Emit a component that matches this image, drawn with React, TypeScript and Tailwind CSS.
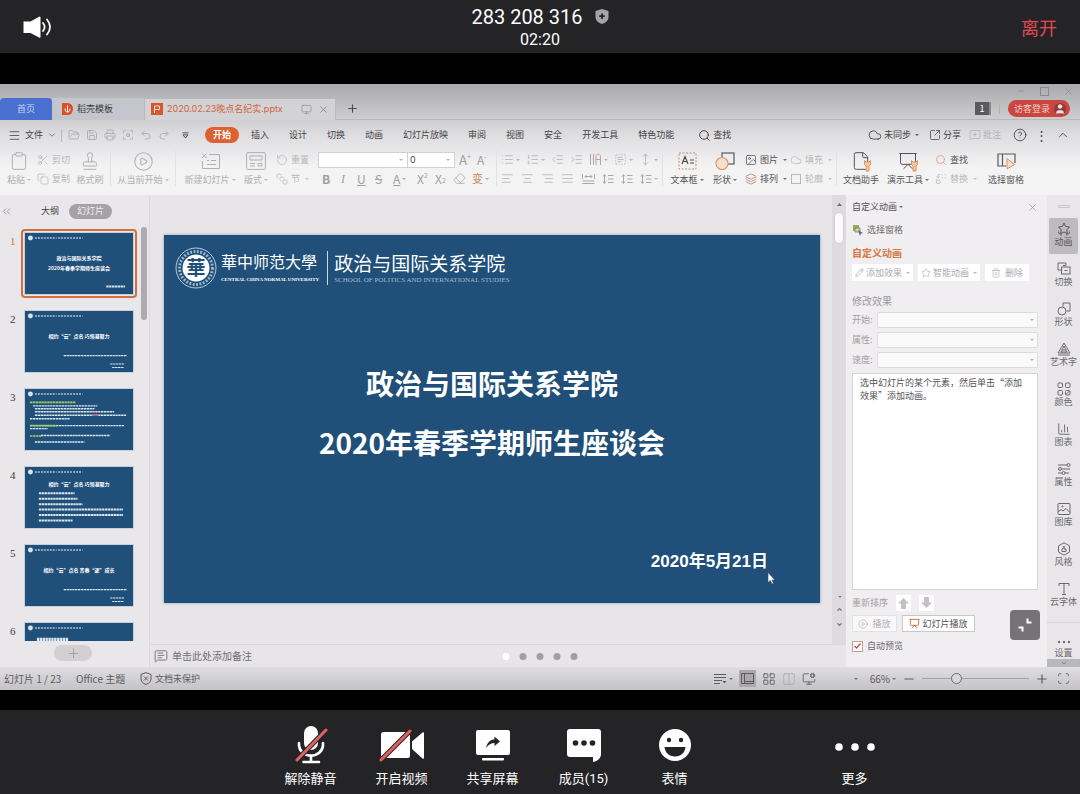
import { useState } from "react"
import type { ReactNode } from "react"
import {
  AlignCenter,
  AlignJustify,
  AlignLeft,
  AlignRight,
  ChartColumn,
  ChevronDown,
  ChevronUp,
  ChevronsLeft,
  CircleHelp,
  CirclePlay,
  Clipboard,
  Cloud,
  Columns2,
  Copy,
  Eraser,
  File,
  FolderOpen,
  Image,
  IndentDecrease,
  IndentIncrease,
  Layers,
  LayoutGrid,
  List,
  ListOrdered,
  Menu,
  MessageSquarePlus,
  MessageSquareText,
  Minus,
  Monitor,
  MonitorCog,
  MoveVertical,
  Pencil,
  Plus,
  Presentation,
  Printer,
  Redo2,
  Replace,
  RotateCcw,
  Save,
  Scan,
  ScanSearch,
  Scissors,
  Search,
  SquareArrowOutUpRight,
  SquareStack,
  Stamp,
  Star,
  TextSelect,
  Trash2,
  Undo2,
  User,
  X,
} from "lucide-react"

const thin = { size: 12, strokeWidth: 1.5 }

function Caret() {
  return (
    <svg width="4" height="2" viewBox="0 0 4 2" className="ml-0.5 shrink-0 opacity-80" aria-hidden="true">
      <path d="M0 0h4L2 2z" fill="currentColor" />
    </svg>
  )
}

function Divider() {
  return <div className="mx-1 h-9 w-px shrink-0 bg-[#e3e2e4]" />
}

function Big({ icon, label, width, off, caret }: { icon: ReactNode; label: string; width: string; off?: boolean; caret?: boolean }) {
  return (
    <button className={`flex shrink-0 flex-col items-center whitespace-nowrap ${width} ${off ? "text-[#b1afb2]" : "text-[#555357]"}`}>
      <span className="flex h-[22px] items-center">{icon}</span>
      <span className="flex h-4 items-center">
        {label}
        {caret && <Caret />}
      </span>
    </button>
  )
}

function Small({ icon, label, off, caret }: { icon: ReactNode; label: string; off?: boolean; caret?: boolean }) {
  return (
    <button className={`flex h-[19px] items-center gap-[3px] whitespace-nowrap ${off ? "text-[#b9b7ba]" : "text-[#555357]"}`}>
      {icon}
      {label}
      {caret && <Caret />}
    </button>
  )
}

function Tool({ label, width, children }: { label: string; width: string; children: ReactNode }) {
  return (
    <button aria-label={label} className={`flex h-[19px] shrink-0 items-center ${width}`}>
      {children}
    </button>
  )
}

/* ---------- meeting bars ---------- */

function MeetingHeader() {
  return (
    <header className="flex h-[53px] shrink-0 items-center justify-between bg-[#242427] px-[23px] font-[Roboto,'Noto_Sans_CJK_SC',sans-serif]">
      <button aria-label="扬声器" className="w-[60px]">
        <svg width="29" height="24" viewBox="0 0 29 24" fill="none">
          <path d="M0.5 6.5h7L16.500 1.500a1 1 0 0 1 1 .8v19.400a1 1 0 0 1-1.500.8L7.500 18h-7z" fill="#fff" />
          <path d="M20 8c2 2.500 2 5.500 0 8M24 4.500c4 4.500 4 10.500 0 15" stroke="#fff" strokeWidth="1.800" strokeLinecap="round" />
        </svg>
      </button>
      <div className="flex flex-col items-center text-white">
        <div className="flex items-center gap-3 text-xl leading-[26px]">
          <h1>283 208 316</h1>
          <svg width="14" height="15" viewBox="0 0 14 15" aria-hidden="true">
            <path d="M7 0 13.500 2v6c0 3.500-3 6-6.500 7C3.500 14 .5 11.500.5 8V2z" fill="#a5a5a8" />
            <path d="M7 4.500v5.500M4.200 7.200h5.600" stroke="#242427" strokeWidth="1.800" />
          </svg>
        </div>
        <time className="text-base leading-5">02:20</time>
      </div>
      <button className="w-[60px] pt-1 text-right text-[18px] text-[#e5484f]">离开</button>
    </header>
  )
}

function MicOff() {
  return (
    <svg width="34" height="38" viewBox="0 0 34 38" fill="none">
      <rect x="10" y="0" width="14" height="24" rx="7" fill="#fff" />
      <path d="M5 17v2a12 10.500 0 0 0 24 0v-2M17 30v5M9.500 36h15.500" stroke="#fff" strokeWidth="2.600" strokeLinecap="round" />
      <path d="M3 34 32 4" stroke="#242427" strokeWidth="5" />
      <path d="M3 34 32 4" stroke="#e0625f" strokeWidth="3" strokeLinecap="round" />
    </svg>
  )
}

function CameraOff() {
  return (
    <svg width="46" height="34" viewBox="0 0 46 34" fill="none">
      <rect x="2" y="4" width="29" height="26" rx="2.500" fill="#fff" />
      <path d="M33 13.500 43.500 4.500q1.500-1 1.500 1v24q0 2-1.500 1L33 21z" fill="#fff" />
      <path d="M2 32 31 3" stroke="#242427" strokeWidth="5" />
      <path d="M2 32 31 3" stroke="#e0625f" strokeWidth="3" strokeLinecap="round" />
    </svg>
  )
}

function ShareScreen() {
  return (
    <svg width="36" height="32" viewBox="0 0 36 32">
      <rect x="1" y="1" width="34" height="25" rx="2" fill="#fff" />
      <rect x="7" y="29" width="22" height="2.500" rx="1" fill="#fff" />
      <path d="M11 19c1-6 5-8.500 8.500-8.500V7.500l5.500 5-5.500 4.500v-3C16 14 13.500 15.500 11 19z" fill="#242427" />
    </svg>
  )
}

function Members() {
  return (
    <svg width="36" height="34" viewBox="0 0 36 34">
      <path d="M4 1h28a3 3 0 0 1 3 3v22c0 4-3 7-8 8v-5H4a3 3 0 0 1-3-3V4a3 3 0 0 1 3-3z" fill="#fff" />
      <circle cx="9.500" cy="15" r="2.800" fill="#242427" />
      <circle cx="18" cy="15" r="2.800" fill="#242427" />
      <circle cx="26.500" cy="15" r="2.800" fill="#242427" />
    </svg>
  )
}

function Smile() {
  return (
    <svg width="34" height="34" viewBox="0 0 34 34">
      <circle cx="17" cy="17" r="16" fill="#fff" />
      <circle cx="11" cy="12" r="2.200" fill="#242427" />
      <circle cx="23" cy="12" r="2.200" fill="#242427" />
      <path d="M6.500 19h21c-.5 5.500-4.500 9.500-10.500 9.500S7 24.500 6.500 19z" fill="#242427" />
    </svg>
  )
}

function More() {
  return (
    <svg width="42" height="34" viewBox="0 0 42 34" fill="#fff">
      <circle cx="5" cy="19" r="3.800" />
      <circle cx="21" cy="19" r="3.800" />
      <circle cx="37" cy="19" r="3.800" />
    </svg>
  )
}

const meetingActions = [
  { label: "解除静音", icon: MicOff },
  { label: "开启视频", icon: CameraOff },
  { label: "共享屏幕", icon: ShareScreen },
  { label: "成员(15)", icon: Members },
  { label: "表情", icon: Smile },
]

function MeetingFooter() {
  return (
    <footer className="flex h-[84px] shrink-0 items-start bg-[#242427] pl-[265px] pt-4 text-[13px] text-white font-[Roboto,'Noto_Sans_CJK_SC',sans-serif]">
      {meetingActions.map((action) => (
        <button key={action.label} className="flex w-[91px] flex-col items-center">
          <span className="flex h-[38px] items-center">
            <action.icon />
          </span>
          <span className="mt-[5px] leading-5">{action.label}</span>
        </button>
      ))}
      <button className="ml-[89px] flex w-[91px] flex-col items-center">
        <span className="flex h-[38px] items-center">
          <More />
        </span>
        <span className="mt-[5px] leading-5">更多</span>
      </button>
    </footer>
  )
}

/* ---------- office window ---------- */

function TitleBar() {
  return (
    <div>
      <div className="flex h-[14px] items-center justify-end gap-3.5 pr-1.5 text-[#8a888b]">
        <button aria-label="最小化"><Minus size={10} strokeWidth={1.5} /></button>
        <button aria-label="最大化">
          <svg width="9" height="9" viewBox="0 0 9 9"><rect x="0.5" y="0.5" width="8" height="8" fill="none" stroke="currentColor" /></svg>
        </button>
        <button aria-label="关闭"><X size={11} strokeWidth={1.5} /></button>
      </div>
      <div className="flex h-[22px] items-center border-b border-[#b9b8bc]">
        <button className="h-[22px] w-[52px] rounded-t-sm bg-[#4a70cf] text-[#c6d5fa]">首页</button>
        <button className="flex h-[22px] w-[92px] items-center gap-1 bg-[#c5c6cc] pl-2.5 text-[#3b393c]">
          <svg width="11" height="12" viewBox="0 0 11 12">
            <path d="M0 0h6a5 6 0 0 1 0 12H0z" fill="#d84f2d" />
            <path d="M5.500 2.500v6.500M3 5.500c0 2.500 1 3.500 2.500 3.500S8 8 8 5.500" fill="none" stroke="#fff" />
          </svg>
          稻壳模板
        </button>
        <div className="flex h-[22px] w-48 items-center gap-1 border-x border-t border-[#b9b8bc] bg-[#d3d3d6] px-1.5">
          <svg width="12" height="12" viewBox="0 0 12 12" className="shrink-0">
            <rect width="12" height="12" fill="#d7572f" />
            <path d="M3.500 10V3h5v3.500h-5" fill="none" stroke="#f6d9cf" />
          </svg>
          <a href="#doc" className="font-[Inter,'Noto_Sans_CJK_SC',sans-serif] whitespace-nowrap text-[#cf6440]">2020.02.23晚点名纪实.pptx</a>
          <span className="ml-auto flex items-center gap-1.5 text-[#807e81]">
            <Monitor size={11} strokeWidth={1.2} />
            <button aria-label="关闭标签"><X size={11} strokeWidth={1.8} /></button>
          </span>
        </div>
        <button aria-label="新建标签" className="ml-2.5 text-[#4c4a4d]"><Plus size={13} /></button>
        <span className="ml-auto flex h-[13px] w-4 items-center justify-center border-r-2 border-[#8b898c] bg-[#5b595c] text-white">1</span>
        <span className="mx-2 h-2.5 w-px bg-[#b2b1b4]" />
        <button className="mr-2.5 flex h-[17px] items-center gap-1 rounded-full bg-[#c9473f] pl-1.5 pr-1 text-[#f7cdc8]">
          访客登录
          <User size={12} className="rounded-full bg-[#8d3a39] text-[#f0dedc]" fill="currentColor" strokeWidth={1} />
        </button>
      </div>
    </div>
  )
}

const menus = ["插入", "设计", "切换", "动画", "幻灯片放映", "审阅", "视图", "安全", "开发工具", "特色功能"]

function MenuBar() {
  return (
    <nav className="flex h-[30px] items-center whitespace-nowrap text-[#464447]">
      <button className="flex w-[62px] items-center gap-1 border-r border-[#bbb9bc] pl-2">
        <Menu size={13} strokeWidth={1.5} />
        文件
        <ChevronDown size={10} strokeWidth={1.5} />
      </button>
      <div className="flex w-[143px] items-center gap-1.5 pl-1.5 text-[#a3a1a4]">
        <FolderOpen {...thin} />
        <Save {...thin} />
        <Printer {...thin} />
        <ScanSearch {...thin} />
        <Undo2 {...thin} />
        <Redo2 {...thin} />
        <svg width="7" height="7" viewBox="0 0 7 7" fill="none" stroke="#59575a" className="ml-1.5">
          <path d="M.5.8h6M1 2.800h5L3.500 6z" />
        </svg>
      </div>
      <button className="mr-3 h-4 w-[34px] rounded-full bg-[#dc6234] font-bold text-white">开始</button>
      <div className="flex gap-5">
        {menus.map((menu) => (
          <button key={menu}>{menu}</button>
        ))}
      </div>
      <button className="ml-6 flex items-center gap-0.5">
        <Search size={13} strokeWidth={1.8} />
        查找
      </button>
      <div className="ml-auto flex items-center pr-2.5">
        <button className="mr-2.5 flex items-center gap-0.5">
          <Cloud size={14} strokeWidth={1.5} />
          未同步
          <Caret />
        </button>
        <button className="mr-2 flex items-center gap-0.5">
          <SquareArrowOutUpRight {...thin} />
          分享
        </button>
        <button className="mr-3 flex items-center gap-0.5 text-[#b1afb2]">
          <MessageSquarePlus {...thin} />
          批注
        </button>
        <button aria-label="帮助" className="mr-2"><CircleHelp size={14} strokeWidth={1.5} /></button>
        <button aria-label="更多选项" className="mr-2 text-[13px]">⋮</button>
        <button aria-label="收起功能区"><ChevronUp size={14} strokeWidth={1.5} /></button>
      </div>
    </nav>
  )
}

function FontGroup() {
  return (
    <div className="w-[174px] shrink-0 text-[#a19fa2]">
      <div className="flex h-[19px] items-center">
        <div className="relative flex h-4 w-[90px] items-center border border-[#d2d0d3] bg-white">
          <select aria-label="字体" className="w-full appearance-none"><option></option></select>
          <span className="pointer-events-none absolute right-1"><Caret /></span>
        </div>
        <div className="relative mr-1 flex h-4 w-[47px] items-center border border-l-0 border-[#d2d0d3] bg-white">
          <select aria-label="字号" className="w-full appearance-none pl-0.5 font-[Inter,sans-serif] text-[#4c4a4d]"><option>0</option></select>
          <span className="pointer-events-none absolute right-1"><Caret /></span>
        </div>
        <Tool label="增大字号" width="w-[18px]"><span className="text-[13px]">A</span><sup className="text-[7px]">+</sup></Tool>
        <Tool label="减小字号" width="w-3"><span className="text-xs">A</span><sup className="text-[7px]">-</sup></Tool>
      </div>
      <div className="flex h-[19px] items-center pl-1 text-xs">
        <Tool label="加粗" width="w-[19px]"><b>B</b></Tool>
        <Tool label="倾斜" width="w-4"><i className="font-[Liberation_Serif,serif]">I</i></Tool>
        <Tool label="下划线" width="w-[18px]"><u>U</u></Tool>
        <Tool label="删除线" width="w-[18px]"><s>S</s></Tool>
        <Tool label="字体颜色" width="w-6"><u>A</u><Caret /></Tool>
        <Tool label="上标" width="w-[18px]">X<sup className="text-[7px]">2</sup></Tool>
        <Tool label="下标" width="w-[18px]">X<sub className="text-[7px]">2</sub></Tool>
        <Tool label="清除格式" width="w-[19px]"><Eraser size={13} strokeWidth={1.3} /></Tool>
        <Tool label="拼音指南" width="w-[18px]"><span className="text-[11px] text-[#c9875f]">变</span><Caret /></Tool>
      </div>
    </div>
  )
}

function SpacingIcon() {
  return (
    <svg width="12" height="12" viewBox="0 0 12 12" fill="none" stroke="currentColor">
      <path d="M2.500 2v8M1 3.500 2.500 1.500 4 3.500M1 8.500l1.500 2L4 8.500M6 2.500h5.500M6 6h5.500M6 9.500h5.500" />
    </svg>
  )
}

function SpreadIcon() {
  return (
    <svg width="13" height="12" viewBox="0 0 13 12" fill="none" stroke="currentColor">
      <path d="M.5 1v5M12.500 1v5M3 3.500h7M4.500 2 3 3.500 4.500 5M8.500 2 10 3.500 8.500 5M.5 8h12M.5 10.500h12" />
    </svg>
  )
}

function VerticalTextIcon() {
  return (
    <svg width="13" height="13" viewBox="0 0 13 13" fill="none" stroke="currentColor">
      <path d="M1.500 1v11M4.500 1v11M7 12V3.500c0-3 4.500-3 4.500 0V12M7 6.500h4.500" />
      <path d="M4.500 1v11" stroke="#cf9d86" />
    </svg>
  )
}

const paraTop = [
  { label: "项目符号", icon: List, caret: true },
  { label: "编号", icon: ListOrdered, caret: true },
  { label: "减少缩进", icon: IndentDecrease },
  { label: "增加缩进", icon: IndentIncrease },
  { label: "文字方向", icon: VerticalTextIcon, caret: true },
  { label: "对齐文本", icon: TextSelect, caret: true },
  { label: "智能图形", icon: MoveVertical, caret: true },
]

const paraBottom = [
  { label: "左对齐", icon: AlignLeft },
  { label: "居中", icon: AlignCenter },
  { label: "右对齐", icon: AlignRight },
  { label: "两端对齐", icon: AlignJustify },
  { label: "分散对齐", icon: SpreadIcon },
  { label: "段前间距", icon: SpacingIcon },
  { label: "段后间距", icon: SpacingIcon },
  { label: "行距", icon: SpacingIcon, caret: true },
]

function ParagraphGroup() {
  return (
    <div className="w-[157px] shrink-0 text-[#aaa8ab]">
      <div className="flex h-[19px] justify-between">
        {paraTop.map((p) => (
          <Tool key={p.label} label={p.label} width="w-auto">
            <p.icon size={13} strokeWidth={1.3} />
            {p.caret && <Caret />}
          </Tool>
        ))}
      </div>
      <div className="flex h-[19px] justify-between">
        {paraBottom.map((p) => (
          <Tool key={p.label} label={p.label} width="w-auto">
            <p.icon size={13} strokeWidth={1.3} />
            {p.caret && <Caret />}
          </Tool>
        ))}
      </div>
    </div>
  )
}

function ShapesIcon() {
  return (
    <svg width="20" height="20" viewBox="0 0 20 20" fill="none">
      <rect x="7" y="2" width="12" height="11" stroke="#5b595c" strokeWidth="1.200" />
      <circle cx="7" cy="12.500" r="6" fill="#f5dfcc" stroke="#d99a72" strokeWidth="1.200" />
    </svg>
  )
}

function NewSlideIcon() {
  return (
    <svg width="19" height="18" viewBox="0 0 19 18" fill="none" stroke="currentColor">
      <path d="M8 2.500h10.500v14H1.500V9M1 1.500l4.500 4.500M5.500 1.500 1 6M6 8.500h2M10 8.500h5M6 12.500h9" />
    </svg>
  )
}

function SlideLayout() {
  return (
    <svg width="20" height="18" viewBox="0 0 20 18" fill="none" stroke="currentColor">
      <rect x="0.600" y="0.600" width="18.800" height="16.800" rx="1" />
      <path d="M4 4h12v4H4zM4 11.500h5M4 14h5M12 11.500h4v2.500h-4z" />
    </svg>
  )
}

function TextBoxIcon() {
  return (
    <svg width="19" height="18" viewBox="0 0 19 18" fill="none">
      <rect x="1" y="1" width="17" height="16" stroke="#c98b6c" strokeDasharray="2 1.500" />
      <path d="m4 12 3-7.500L10 12M5 9.500h4M12 8h4M12 11h4" stroke="#4b494c" strokeWidth="1.200" />
    </svg>
  )
}

function PaneIcon() {
  return (
    <svg width="19" height="18" viewBox="0 0 19 18" fill="none">
      <path d="M9 14H1V2h17v9M5.500 2v12" stroke="#5b595c" strokeWidth="1.200" />
      <path d="m10 6.500 7.500 6-7.500 4.500z" fill="#f5dfcc" stroke="#d98e65" />
    </svg>
  )
}

function OrangeTag({ icon }: { icon: ReactNode }) {
  return (
    <span className="relative">
      {icon}
      <svg width="7" height="12" viewBox="0 0 7 12" className="absolute -bottom-px right-0">
        <path d="M0.500 0.500v4l1.500 1.500v5h3V6l1.500-1.500v-4L5 2H2z" fill="#f3c7a4" stroke="#dc945f" />
      </svg>
    </span>
  )
}

function Ribbon() {
  return (
    <div className="flex h-[45px] items-start whitespace-nowrap pl-1">
      <Big off caret width="w-[30px]" label="粘贴" icon={<Clipboard size={20} strokeWidth={1.2} />} />
      <div className="ml-[3px] w-[37px] shrink-0">
        <Small off label="剪切" icon={<Scissors {...thin} />} />
        <Small off label="复制" icon={<Copy {...thin} />} />
      </div>
      <Big off width="w-8" label="格式刷" icon={<Stamp size={20} strokeWidth={1.2} />} />
      <Divider />
      <Big off caret width="w-14" label="从当前开始" icon={<CirclePlay size={21} strokeWidth={1.2} />} />
      <Divider />
      <Big off caret width="w-[60px]" label="新建幻灯片" icon={<NewSlideIcon />} />
      <Big off caret width="w-8" label="版式" icon={<SlideLayout />} />
      <div className="ml-1 w-[42px] shrink-0">
        <Small off label="重置" icon={<RotateCcw {...thin} />} />
        <Small off caret label="节" icon={<SquareStack {...thin} />} />
      </div>
      <FontGroup />
      <Divider />
      <ParagraphGroup />
      <Divider />
      <Big caret width="w-10" label="文本框" icon={<TextBoxIcon />} />
      <Big caret width="w-9" label="形状" icon={<ShapesIcon />} />
      <div className="ml-0.5 w-[45px] shrink-0">
        <Small caret label="图片" icon={<Image {...thin} />} />
        <Small caret label="排列" icon={<Layers {...thin} className="text-[#a87a66]" />} />
      </div>
      <div className="w-[42px] shrink-0">
        <Small off caret label="填充" icon={<Cloud {...thin} />} />
        <Small off caret label="轮廓" icon={<svg width="12" height="12" viewBox="0 0 12 12"><rect x="1.500" y="1.500" width="9" height="9" fill="none" stroke="currentColor" /></svg>} />
      </div>
      <Divider />
      <Big width="w-10" label="文档助手" icon={<OrangeTag icon={<File size={20} strokeWidth={1.2} />} />} />
      <Big caret width="w-[54px]" label="演示工具" icon={<OrangeTag icon={<Presentation size={20} strokeWidth={1.2} />} />} />
      <div className="w-[46px] shrink-0">
        <Small label="查找" icon={<Search {...thin} className="text-[#d19a7b]" />} />
        <Small off caret label="替换" icon={<Replace {...thin} />} />
      </div>
      <Big width="w-[50px]" label="选择窗格" icon={<PaneIcon />} />
    </div>
  )
}

/* ---------- slides ---------- */

const thumbs = [
  { title: "政治与国际关系学院", second: "2020年春季学期师生座谈会", kind: "cover" },
  { title: "相约“云”点名 巧领凝聚力", kind: "section" },
  { title: "", kind: "notes" },
  { title: "相约“云”点名 巧领凝聚力", kind: "list" },
  { title: "相约“云”点名 青春“逐”成长", kind: "section" },
  { title: "", kind: "heading" },
]

function ThumbArt({ kind }: { kind: string }) {
  const dash = { stroke: "#d9e5ee", strokeWidth: 1.4, strokeDasharray: "2.400 .5" }
  return (
    <svg viewBox="0 0 109 61" className="w-full" aria-hidden="true">
      <circle cx="5.500" cy="5" r="2.500" fill="#d7e4ee" />
      <path d="M10 5h22M33.500 5H58" stroke="#a9c2d6" strokeWidth="1.600" strokeDasharray="2 1" />
      {kind === "cover" && <path d="M82 54h19" {...dash} strokeWidth={2} />}
      {kind === "section" && <path d="M39 45h64M86 53.500h14M88 57h12" {...dash} strokeWidth={1.200} />}
      {kind === "notes" && (
        <>
          <path d="M8 17h65M10 20h60M10 23h80M10 26.500h92M5 30h40M5 37h95M5 40h18M16 47h70M10 53.500h50" {...dash} />
          <path d="M5 13.500h46M5 37h27M5 47.500h12" stroke="#a9cf63" strokeWidth="1.600" strokeDasharray="2.400 .5" />
          <path d="M68 26.500h6" stroke="#d05a6a" strokeWidth="1.400" />
        </>
      )}
      {kind === "list" && <path d="M14 26.500h36M14 32h39M14 37.500h44M14 43h85M14 48.500h85M14 54h34" {...dash} strokeWidth={2} />}
      {kind === "heading" && <path d="M12 17h32" {...dash} strokeWidth={4} />}
    </svg>
  )
}

function SlideList() {
  const [current, setCurrent] = useState(0)
  return (
    <aside className="flex w-[150px] shrink-0 flex-col border-r border-[#dbd9dc] bg-[#e9e7e9]">
      <div className="flex h-8 items-center">
        <button aria-label="折叠" className="w-[41px] text-[#8d8b8e]"><ChevronsLeft size={13} strokeWidth={1.5} /></button>
        <button className="mr-2.5 text-[#454346]">大纲</button>
        <button className="h-[15px] w-[43px] rounded-full bg-[#a4a2a5] text-[#f0eef0]">幻灯片</button>
      </div>
      <div className="flex min-h-0 flex-1 gap-1 overflow-hidden">
        <ol className="w-[137px] space-y-[9px] pt-0.5">
          {thumbs.map((thumb, i) => (
            <li key={i} className="flex gap-1.5 pl-2.5">
              <span className={`w-[5px] pt-1.5 font-[Liberation_Serif,serif] text-[11px] ${i === current ? "text-[#cf6f48]" : "text-[#3b393c]"}`}>{i + 1}</span>
              <button
                aria-label={`幻灯片 ${i + 1}`}
                onClick={() => setCurrent(i)}
                className={`relative h-[69px] flex-1 rounded-sm border-2 p-0.5 ${i === current ? "border-[#d2703f]" : "border-transparent"}`}
              >
                <span className="block bg-[#204f79] outline outline-[#c5d0da]">
                  <ThumbArt kind={thumb.kind} />
                </span>
                <span
                  className={`absolute inset-x-0 text-center text-[5px] leading-[10px] font-bold whitespace-nowrap text-white ${thumb.kind === "list" ? "top-3.5" : "top-[22px]"}`}
                >
                  {thumb.title}
                  {thumb.second && <><br />{thumb.second}</>}
                </span>
              </button>
            </li>
          ))}
        </ol>
        <div className="h-[93px] w-[6px] rounded-full bg-[#adabae]" />
      </div>
      <button aria-label="新建幻灯片" className="mt-1 mb-1.5 ml-[54px] flex h-4 w-[38px] shrink-0 items-center justify-center rounded-full bg-[#d2d0d3] text-[#9b999c]">
        <Plus size={15} strokeWidth={1.3} />
      </button>
    </aside>
  )
}

function Emblem() {
  return (
    <svg width="42" height="42" viewBox="0 0 42 42" className="shrink-0" aria-hidden="true">
      <circle cx="21" cy="21" r="20" fill="none" stroke="#b6cbdc" />
      <circle cx="21" cy="21" r="16.500" fill="none" stroke="#9db8cd" strokeWidth="3" strokeDasharray="1.800 1.600" />
      <circle cx="21" cy="21" r="13.500" fill="#fff" />
      <text x="21" y="28" textAnchor="middle" fontSize="19" fontWeight="bold" fill="#204f79">華</text>
    </svg>
  )
}

function Slide() {
  return (
    <article className="relative flex aspect-[656/368] w-full flex-col bg-[#204f79] text-white shadow-[0_0_3px_#8fa3b5]">
      <div className="flex items-center gap-1 pl-[11px] pt-3">
        <Emblem />
        <div className="pr-1">
          <p className="text-base leading-6 whitespace-nowrap font-['Liberation_Serif','Noto_Sans_CJK_SC',serif]">華中师范大學</p>
          <p className="font-['Liberation_Serif',serif] text-[5px] leading-[10px] font-bold whitespace-nowrap">CENTRAL CHINA NORMAL UNIVERSITY</p>
        </div>
        <div className="border-l border-[#cbd9e4] pl-1.5">
          <p className="text-[19px] leading-6 whitespace-nowrap">政治与国际关系学院</p>
          <p className="font-['Liberation_Serif',serif] text-[7px] leading-[10px] whitespace-nowrap text-[#a3bbcf]">SCHOOL OF POLITICS AND INTERNATIONAL STUDIES</p>
        </div>
      </div>
      <h2 className="mt-[65px] text-center text-[28px] leading-[59px] font-bold">
        政治与国际关系学院
        <br />
        2020年春季学期师生座谈会
      </h2>
      <p className="mt-auto pr-[52px] pb-[27px] text-right font-['Liberation_Sans','Noto_Sans_CJK_SC',sans-serif] text-[17px] leading-7 font-bold">2020年5月21日</p>
      <svg width="9" height="13" viewBox="0 0 9 13" className="absolute right-11 bottom-[18px]">
        <path d="M1 0.500v10l2.300-2 1.700 3.500 1.500-.8L5 8h3z" fill="#fff" stroke="#3a4956" strokeWidth="0.600" />
      </svg>
    </article>
  )
}

function Stage() {
  return (
    <main className="flex min-w-0 flex-1 flex-col bg-[#e7e5e8]">
      <div className="flex min-h-0 flex-1">
        <div className="min-w-0 flex-1 pt-10 pl-3.5 pr-3">
          <Slide />
        </div>
        <div className="flex w-[14px] shrink-0 flex-col items-center bg-[#dddbde] pt-2 text-[#6f6d70]">
          <svg width="5" height="3" viewBox="0 0 5 3"><path d="M0 3h5L2.500 0z" fill="currentColor" /></svg>
          <div className="mt-1.5 h-8 w-2.5 rounded-full border border-[#cfcdd0] bg-[#fbfafb]" />
          <div className="mt-auto mb-4 flex flex-col items-center gap-2">
            <Caret />
            <ChevronUp size={7} strokeWidth={4} />
            <ChevronDown size={7} strokeWidth={4} />
          </div>
        </div>
      </div>
      <label className="flex h-[23px] shrink-0 items-center gap-1 border-t border-[#dad8db] pl-1 text-[#706e71]">
        <MessageSquareText size={14} strokeWidth={1.5} />
        <input aria-label="备注" placeholder="单击此处添加备注" className="w-60 bg-transparent text-[10px] outline-none placeholder:text-[#706e71]" />
      </label>
    </main>
  )
}

/* ---------- right side ---------- */

const effectFields = [
  { id: "start", label: "开始:" },
  { id: "prop", label: "属性:" },
  { id: "speed", label: "速度:" },
]

function AnimationPane() {
  return (
    <section className="flex w-[201px] shrink-0 flex-col bg-[#f0eef0] pl-1.5 pr-[9px] text-[#545255]">
      <div className="flex h-6 items-center justify-between">
        <button className="flex items-center">自定义动画<Caret /></button>
        <button aria-label="关闭窗格" className="text-[#918f92]"><X size={11} strokeWidth={1.5} /></button>
      </div>
      <button className="flex h-[22px] items-center gap-1 text-[#6b696c]">
        <svg width="11" height="11" viewBox="0 0 11 11">
          <path d="M1 0h6v6H1z" fill="#8dad5c" />
          <path d="M3 3h5v4H3z" fill="#ead36b" stroke="#6f7d8d" strokeWidth="0.800" />
          <path d="m6 5 5 3-2 .5L8 11z" fill="#486fa3" />
        </svg>
        选择窗格
      </button>
      <h3 className="flex h-[23px] items-center text-[10px] font-bold text-[#d5783f]">自定义动画</h3>
      <div className="flex h-[17px] gap-[5px] text-[#adabae]">
        <button className="flex w-[61px] items-center justify-center gap-0.5 bg-white"><Pencil size={9} />添加效果<Caret /></button>
        <button className="flex w-[62px] items-center justify-center gap-0.5 bg-white"><Star size={10} strokeWidth={1.5} />智能动画<Caret /></button>
        <button className="flex w-11 items-center justify-center gap-1 bg-white"><Trash2 size={10} strokeWidth={1.5} />删除</button>
      </div>
      <h3 className="mt-3 mb-px text-[10px] leading-4 text-[#9a989b]">修改效果</h3>
      {effectFields.map((field) => (
        <div key={field.id} className="flex h-5 items-center text-[#a09ea1]">
          <label htmlFor={field.id} className="w-[25px]">{field.label}</label>
          <div className="relative flex flex-1 items-center">
            <select id={field.id} className="h-4 w-full appearance-none rounded-xs border border-[#dddbde] bg-[#fbfafb]"><option></option></select>
            <span className="pointer-events-none absolute right-1"><Caret /></span>
          </div>
        </div>
      ))}
      <div className="mt-[3px] min-h-0 flex-1 border border-[#d5d3d6] bg-white px-[7px] pt-0.5 leading-[13px]">
        选中幻灯片的某个元素，然后单击“添加效果”添加动画。
      </div>
      <div className="mt-[5px] flex items-center gap-2 text-[#a09ea1]">
        重新排序
        <button aria-label="上移" className="flex h-4 w-[15px] items-center justify-center bg-white"><BlockArrow /></button>
        <button aria-label="下移" className="flex h-4 w-[15px] rotate-180 items-center justify-center bg-white"><BlockArrow /></button>
      </div>
      <div className="mt-1 flex h-[17px] gap-[5px]">
        <button className="flex w-[45px] items-center justify-center gap-1 border border-[#e4e2e5] bg-[#faf9fa] text-[#adabae]"><CirclePlay size={10} strokeWidth={1.5} />播放</button>
        <button className="flex w-[73px] items-center justify-center gap-0.5 border border-[#c9c7ca] bg-white">
          <Presentation size={11} className="text-[#c9683f]" />
          幻灯片播放
        </button>
      </div>
      <label className="mt-2 mb-[15px] flex h-3 items-center gap-1 text-[#6b696c]">
        <span className="relative flex size-[11px] items-center justify-center">
          <input type="checkbox" defaultChecked className="peer size-[11px] appearance-none border border-[#d09a90] bg-white" />
          <svg width="7" height="6" viewBox="0 0 7 6" className="pointer-events-none absolute hidden peer-checked:block">
            <path d="m0.500 3 2 2 4-4.500" fill="none" stroke="#9b5a52" strokeWidth="1.300" />
          </svg>
        </span>
        自动预览
      </label>
    </section>
  )
}

function BlockArrow() {
  return (
    <svg width="11" height="11" viewBox="0 0 11 11"><path d="M5.500 0 11 5.500H8V11H3V5.500H0z" fill="#c3c1c4" /></svg>
  )
}

const sideIcons: Record<string, ReactNode> = {
  动画: <><path d="m7 1 1.700 3.500 3.800.5L9.800 7.800l.6 3.900L7 10l-3.400 1.700.6-3.900L1.500 5l3.800-.5z" /><path d="M1.500 9.500c0 2 1.500 3.500 3.500 3.500M12.500 9.500c0 2-1.500 3.500-3.500 3.500" /></>,
  切换: <><path d="M9 3.500V1H1v7h3" /><rect x="4.500" y="5" width="8.500" height="7" /><path d="M9 3.500H6M7.500 8.500h3" /></>,
  形状: <><path d="M6 4.500V1h7v8H9.500" /><circle cx="5" cy="9" r="4" /></>,
  艺术字: <><path d="M7 1 13 11H1z" /><path d="m7 4 3 6H4zM1 13h12M5 8h4" /></>,
  颜色: <><rect x="1" y="1" width="4.500" height="4.500" rx="1" /><rect x="8.500" y="1" width="4.500" height="4.500" rx="1" /><rect x="1" y="8.500" width="4.500" height="4.500" rx="1" /><rect x="8.500" y="8.500" width="4.500" height="4.500" rx="1" /><path d="m9 12.500 3.500-3.500" /></>,
  属性: <><path d="M1 3h9M4 7h9M1 7h1M1 11h4M8 11h4" /><circle cx="11.500" cy="3" r="1.500" /><circle cx="3" cy="7" r="1.500" /><circle cx="6.500" cy="11" r="1.500" /></>,
  图库: <><rect x="1" y="1.500" width="12" height="11" rx="1" /><path d="m1 10 3-2.500L6 9l3-2.500 4 4" /><circle cx="5.500" cy="4.500" r="0.600" /></>,
  风格: <><path d="m7 .8 5.500 3.100v6.200L7 13.200 1.500 10.100V3.900z" /><path d="M7 4v1.500L5 7v2.500h4V7H7z" /></>,
  云字体: <path d="M2 4V1.500h10V4M7 1.500v11M5 12.500h4" />,
}

const sideItems = ["动画", "切换", "形状", "艺术字", "颜色", "图表", "属性", "图库", "风格", "云字体"]

function SideBar() {
  return (
    <aside className="flex w-[33px] shrink-0 flex-col items-center overflow-hidden bg-[#e8e6e9] text-[#6a686b]">
      <div className="mt-2.5 mb-2.5 h-[3px] w-3 shrink-0 border-y border-[#c8c6c9]" />
      {sideItems.map((item, i) => (
        <button
          key={item}
          className={`mb-1 flex h-9 w-[29px] shrink-0 flex-col items-center justify-center whitespace-nowrap rounded-xs pb-0.5 ${i === 0 ? "bg-[#bdbbbe] text-[#58565a]" : ""}`}
        >
          {item === "图表" ? (
            <ChartColumn size={14} strokeWidth={1.6} />
          ) : (
            <svg width="14" height="14" viewBox="0 0 14 14" fill="none" stroke="currentColor">{sideIcons[item]}</svg>
          )}
          {item}
        </button>
      ))}
      <button className="mt-1 flex min-h-0 w-full flex-1 flex-col items-center overflow-hidden border-t border-[#d5d3d6] pt-3.5">
        <span className="flex h-[11px] gap-[3px] pt-1"><i className="size-0.5 bg-current" /><i className="size-0.5 bg-current" /><i className="size-0.5 bg-current" /></span>
        <span className="leading-[10px]">设置</span>
      </button>
      <button aria-label="向下滚动" className="flex h-2 w-full shrink-0 items-center justify-center bg-[#b6b7bf]"><ChevronDown size={8} /></button>
    </aside>
  )
}

function StatusBar() {
  return (
    <div className="flex h-[23px] shrink-0 items-center whitespace-nowrap bg-linear-to-b from-[#e0dee1] to-[#c3c2c5] pl-1 pr-2.5 text-[#5d5b5e]">
      <span className="w-[72px] text-[10px]">幻灯片 1 / 23</span>
      <span className="w-16 text-[10px]">Office 主题</span>
      <button className="flex items-center gap-[3px]">
        <svg width="12" height="13" viewBox="0 0 12 13" fill="none" stroke="currentColor"><path d="M6 .6 11 2.500v4.500c0 2.500-2 4.500-5 5.500-3-1-5-3-5-5.500V2.500zM4 4.500 8 8.500M8 4.500 4 8.500" /></svg>
        文档未保护
      </button>
      <div className="ml-auto flex items-center gap-1.5">
        <button aria-label="备注面板" className="flex items-center">
          <svg width="13" height="11" viewBox="0 0 13 11" fill="none" stroke="currentColor"><path d="M0 1.500h12M0 4.500h12M0 7.500h8M0 10.500h6" /><path d="M8.500 8h4l-2 2.500z" fill="currentColor" stroke="none" /></svg>
          <Caret />
        </button>
        <button aria-label="普通视图" className="flex h-[17px] w-[17px] items-center justify-center bg-[#aaa8ab]">
          <svg width="13" height="11" viewBox="0 0 13 11" fill="none" stroke="currentColor"><path d="M.5.5h12v10H.5zM3.500.5v10M3.500 8.500h9" /></svg>
        </button>
        <button aria-label="幻灯片浏览"><LayoutGrid size={14} strokeWidth={1.6} /></button>
        <button aria-label="阅读视图" className="text-[#a3a1a4]"><Columns2 size={14} strokeWidth={1.2} /></button>
        <button aria-label="放映设置"><MonitorCog size={14} strokeWidth={1.5} /></button>
      </div>
      <div className="ml-9 flex items-center">
        <Caret />
        <button className="ml-3 mr-1.5 flex items-center text-[10px]">66%<Caret /></button>
        <button aria-label="缩小"><Minus size={14} /></button>
        <input
          type="range"
          aria-label="缩放"
          defaultValue={30}
          className="mx-1.5 h-3 w-[107px] appearance-none bg-transparent [&::-webkit-slider-runnable-track]:h-px [&::-webkit-slider-runnable-track]:bg-[#a3a1a4] [&::-webkit-slider-thumb]:-mt-[5px] [&::-webkit-slider-thumb]:size-[11px] [&::-webkit-slider-thumb]:appearance-none [&::-webkit-slider-thumb]:rounded-full [&::-webkit-slider-thumb]:border [&::-webkit-slider-thumb]:border-[#6b696c] [&::-webkit-slider-thumb]:bg-[#d9d7da]"
        />
        <button aria-label="放大" className="mr-2"><Plus size={14} /></button>
        <button aria-label="适应窗口"><Scan size={13} strokeWidth={1.5} /></button>
      </div>
    </div>
  )
}

export default function App() {
  return (
    <div className="flex h-screen flex-col overflow-hidden bg-black">
      <MeetingHeader />
      <div className="relative mt-[31px] mb-5 flex min-h-0 flex-1 flex-col overflow-hidden bg-[#e7e5e8] text-[9px] leading-3 font-['Noto_Sans_CJK_SC',sans-serif]">
        <div className="shrink-0 bg-linear-to-b from-[#aaa9ab] via-[#dddcde] via-45% to-[#f4f3f4] to-75%">
          <TitleBar />
          <MenuBar />
          <Ribbon />
        </div>
        <div className="flex min-h-0 flex-1">
          <SlideList />
          <Stage />
          <AnimationPane />
          <SideBar />
        </div>
        <StatusBar />

        {/* Shared screen pages */}
        <div className="absolute bottom-[30px] left-1/2 flex -translate-x-1/2 gap-2.5">
          {[0, 1, 2, 3, 4].map((page) => (
            <span key={page} className={`size-[7px] rounded-full ${page === 0 ? "bg-white" : "bg-[#a09ea1]"}`} />
          ))}
        </div>
        <button aria-label="退出全屏" className="absolute right-10 bottom-[50px] flex size-[30px] items-center justify-center rounded bg-[#757376]">
          <svg width="16" height="16" viewBox="0 0 16 16" fill="none" stroke="#fff" strokeWidth="2">
            <path d="M10.500 1.500v4h4M1.500 10.500h4v4" />
          </svg>
        </button>
      </div>
      <MeetingFooter />
    </div>
  )
}
